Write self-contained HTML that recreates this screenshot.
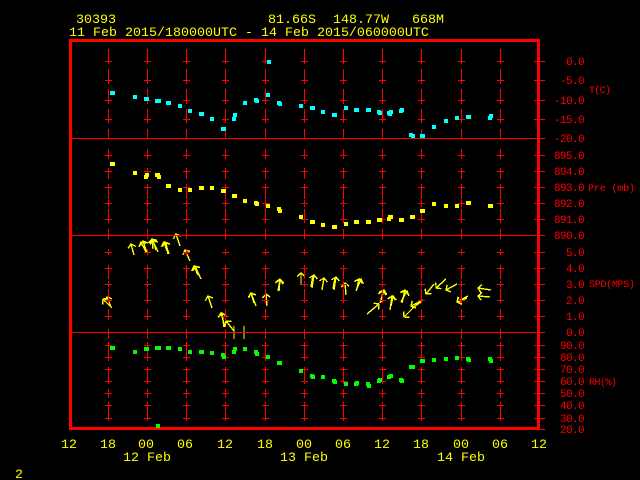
<!DOCTYPE html>
<html><head><meta charset="utf-8"><title>30393</title>
<style>
html,body{margin:0;padding:0;background:#000;width:640px;height:480px;overflow:hidden}
svg{display:block}
text{font-family:"Liberation Mono",monospace;white-space:pre}
.y{fill:#ff0;font-size:13.33px}
.r{fill:#f00;font-size:10px}
.e{text-anchor:end;font-size:11px;letter-spacing:-.6px}
</style></head><body>
<svg width="640" height="480" viewBox="0 0 640 480" xmlns="http://www.w3.org/2000/svg">
<defs>
<marker id="h" markerUnits="userSpaceOnUse" markerWidth="10" markerHeight="10" refX="0" refY="0" orient="auto" overflow="visible" viewBox="-5 -5 10 10">
<path d="M-3.5,-4 L0,0 L-3.5,4" fill="none" stroke="#ff0" stroke-width="1.4" shape-rendering="crispEdges"/>
</marker>
<g id="c" fill="#f00" shape-rendering="crispEdges">
<rect x="0" y="49" width="1" height="15"/><rect x="0" y="69" width="1" height="15"/><rect x="0" y="89" width="1" height="15"/><rect x="0" y="109" width="1" height="14"/><rect x="0" y="129" width="1" height="9"/>
<rect x="0" y="149" width="1" height="10"/><rect x="0" y="168" width="1" height="11"/><rect x="0" y="184" width="1" height="15"/><rect x="0" y="200" width="1" height="7"/><rect x="0" y="209" width="1" height="14"/><rect x="0" y="229" width="1" height="10"/>
<rect x="0" y="249" width="1" height="6"/><rect x="0" y="265" width="1" height="14"/><rect x="0" y="281" width="1" height="6"/><rect x="0" y="289" width="1" height="14"/><rect x="0" y="309" width="1" height="11"/><rect x="0" y="329" width="1" height="10"/>
<rect x="0" y="342" width="1" height="19"/><rect x="0" y="367" width="1" height="17"/><rect x="0" y="389" width="1" height="9"/><rect x="0" y="402" width="1" height="19"/>
<rect x="-3" y="61" width="7" height="1"/><rect x="-3" y="80" width="7" height="1"/><rect x="-3" y="100" width="7" height="1"/><rect x="-3" y="119" width="7" height="1"/>
<rect x="-3" y="155" width="7" height="1"/><rect x="-3" y="171" width="7" height="1"/><rect x="-3" y="187" width="7" height="1"/><rect x="-3" y="203" width="7" height="1"/><rect x="-3" y="219" width="7" height="1"/>
<rect x="-3" y="252" width="7" height="1"/><rect x="-3" y="268" width="7" height="1"/><rect x="-3" y="284" width="7" height="1"/><rect x="-3" y="300" width="7" height="1"/><rect x="-3" y="316" width="7" height="1"/>
<rect x="-3" y="345" width="7" height="1"/><rect x="-3" y="357" width="7" height="1"/><rect x="-3" y="369" width="7" height="1"/><rect x="-3" y="381" width="7" height="1"/><rect x="-3" y="393" width="7" height="1"/><rect x="-3" y="405" width="7" height="1"/><rect x="-3" y="418" width="7" height="1"/>
</g>
</defs>

<!-- wind arrows -->
<g stroke="#ff0" stroke-width="1.4" fill="none" shape-rendering="crispEdges">
<line x1="112" y1="308" x2="103" y2="299" marker-end="url(#h)"/><line x1="111" y1="307" x2="107" y2="297" marker-end="url(#h)"/>
<line x1="134" y1="255" x2="131" y2="244" marker-end="url(#h)"/>
<line x1="147" y1="253" x2="143" y2="241" marker-end="url(#h)"/><line x1="146" y1="252" x2="141" y2="242" marker-end="url(#h)"/>
<line x1="158" y1="252" x2="152" y2="239" marker-end="url(#h)"/><line x1="153" y1="249" x2="152" y2="239" marker-end="url(#h)"/><line x1="156" y1="250" x2="153" y2="240" marker-end="url(#h)"/>
<line x1="169" y1="254" x2="165" y2="242" marker-end="url(#h)"/><line x1="167" y1="251" x2="164" y2="242" marker-end="url(#h)"/><line x1="168" y1="254" x2="166" y2="243"/>
<line x1="180" y1="246" x2="176" y2="234" marker-end="url(#h)"/>
<line x1="190" y1="261" x2="185" y2="250" marker-end="url(#h)"/>
<line x1="201" y1="279" x2="195" y2="266" marker-end="url(#h)"/><line x1="198" y1="275" x2="194" y2="266" marker-end="url(#h)"/>
<line x1="212" y1="308" x2="208" y2="296" marker-end="url(#h)"/>
<line x1="225" y1="327" x2="221" y2="313" marker-end="url(#h)"/><line x1="224" y1="327" x2="222" y2="313" marker-end="url(#h)"/>
<line x1="234" y1="331" x2="226" y2="321" marker-end="url(#h)"/>
<line x1="256" y1="306" x2="251" y2="293" marker-end="url(#h)"/><line x1="254" y1="303" x2="251" y2="293" marker-end="url(#h)"/>
<line x1="267" y1="306" x2="266" y2="294" marker-end="url(#h)"/>
<line x1="279" y1="291" x2="280" y2="279" marker-end="url(#h)"/><line x1="278" y1="291" x2="280" y2="280" marker-end="url(#h)"/>
<line x1="301" y1="285" x2="301" y2="273" marker-end="url(#h)"/>
<line x1="312" y1="288" x2="314" y2="275" marker-end="url(#h)"/><line x1="311" y1="287" x2="313" y2="275"/>
<line x1="322" y1="290" x2="324" y2="278" marker-end="url(#h)"/>
<line x1="334" y1="290" x2="336" y2="277" marker-end="url(#h)"/><line x1="333" y1="289" x2="335" y2="278"/>
<line x1="346" y1="295" x2="345" y2="283" marker-end="url(#h)"/>
<line x1="356" y1="291" x2="361" y2="279" marker-end="url(#h)"/><line x1="357" y1="288" x2="359" y2="279" marker-end="url(#h)"/>
<line x1="367" y1="314" x2="379" y2="304" marker-end="url(#h)"/>
<line x1="380" y1="303" x2="384" y2="290" marker-end="url(#h)"/><line x1="381" y1="302" x2="383" y2="291" marker-end="url(#h)"/>
<line x1="390" y1="310" x2="392" y2="296" marker-end="url(#h)"/><line x1="391" y1="306" x2="393" y2="296" marker-end="url(#h)"/>
<line x1="402" y1="303" x2="405" y2="290" marker-end="url(#h)"/><line x1="401" y1="302" x2="407" y2="291" marker-end="url(#h)"/>
<line x1="418" y1="303" x2="404" y2="317" marker-end="url(#h)"/>
<line x1="423" y1="300" x2="411" y2="306" marker-end="url(#h)"/><line x1="421" y1="302" x2="412" y2="308"/>
<line x1="434" y1="284" x2="426" y2="294" marker-end="url(#h)"/>
<line x1="446" y1="279" x2="436" y2="288" marker-end="url(#h)"/>
<line x1="457" y1="284" x2="446" y2="290" marker-end="url(#h)"/>
<line x1="468" y1="296" x2="457" y2="302" marker-end="url(#h)"/><line x1="467" y1="298" x2="457" y2="302" marker-end="url(#h)"/>
<line x1="491" y1="290" x2="478" y2="288" marker-end="url(#h)"/>
<line x1="490" y1="297" x2="478" y2="296" marker-end="url(#h)"/>
<line x1="234" y1="326" x2="234" y2="339"/><line x1="244" y1="326" x2="244" y2="339"/>
</g>

<!-- frame & horizontal rules -->
<g fill="#f00" shape-rendering="crispEdges">
<rect x="69" y="39" width="471" height="3"/>
<rect x="69" y="427" width="471" height="3"/>
<rect x="69" y="39" width="3" height="391"/>
<rect x="537" y="39" width="3" height="391"/>
<rect x="72" y="138" width="473" height="1"/>
<rect x="72" y="235" width="473" height="1"/>
<rect x="72" y="332" width="473" height="1"/>
<rect x="534" y="61" width="11" height="1"/><rect x="534" y="80" width="11" height="1"/><rect x="534" y="100" width="11" height="1"/><rect x="534" y="119" width="11" height="1"/>
<rect x="534" y="155" width="11" height="1"/><rect x="534" y="171" width="11" height="1"/><rect x="534" y="187" width="11" height="1"/><rect x="534" y="203" width="11" height="1"/><rect x="534" y="219" width="11" height="1"/>
<rect x="534" y="252" width="11" height="1"/><rect x="534" y="268" width="11" height="1"/><rect x="534" y="284" width="11" height="1"/><rect x="534" y="300" width="11" height="1"/><rect x="534" y="316" width="11" height="1"/>
<rect x="534" y="345" width="11" height="1"/><rect x="534" y="357" width="11" height="1"/><rect x="534" y="369" width="11" height="1"/><rect x="534" y="381" width="11" height="1"/><rect x="534" y="393" width="11" height="1"/><rect x="534" y="405" width="11" height="1"/><rect x="534" y="418" width="11" height="1"/><rect x="534" y="429" width="11" height="1"/>
</g>
<use href="#c" x="108"/><use href="#c" x="147"/><use href="#c" x="186"/><use href="#c" x="225"/><use href="#c" x="265"/><use href="#c" x="304"/><use href="#c" x="343"/><use href="#c" x="382"/><use href="#c" x="421"/><use href="#c" x="461"/><use href="#c" x="500"/>

<!-- temperature -->
<g fill="#0ff" shape-rendering="crispEdges">
<rect x="110" y="91" width="5" height="4"/><rect x="133" y="95" width="4" height="4"/><rect x="144" y="97" width="5" height="4"/><rect x="155" y="99" width="6" height="4"/><rect x="166" y="101" width="5" height="4"/><rect x="178" y="104" width="4" height="4"/><rect x="188" y="109" width="4" height="4"/><rect x="199" y="112" width="5" height="4"/><rect x="210" y="117" width="4" height="4"/><rect x="221" y="127" width="5" height="4"/><rect x="232" y="117" width="4" height="4"/><rect x="233" y="113" width="4" height="4"/><rect x="243" y="101" width="4" height="4"/><rect x="254" y="98" width="4" height="4"/><rect x="255" y="99" width="4" height="4"/><rect x="266" y="93" width="4" height="4"/><rect x="267" y="60" width="4" height="4"/><rect x="277" y="101" width="4" height="4"/><rect x="278" y="102" width="4" height="4"/><rect x="299" y="104" width="4" height="4"/><rect x="310" y="106" width="5" height="4"/>
<rect x="321" y="110" width="4" height="4"/><rect x="332" y="113" width="5" height="4"/><rect x="344" y="106" width="4" height="4"/><rect x="354" y="108" width="5" height="4"/><rect x="366" y="108" width="5" height="4"/><rect x="377" y="110" width="4" height="4"/><rect x="378" y="111" width="4" height="4"/><rect x="387" y="111" width="4" height="4"/><rect x="388" y="112" width="4" height="4"/><rect x="389" y="110" width="4" height="4"/><rect x="399" y="109" width="4" height="4"/><rect x="400" y="108" width="4" height="4"/><rect x="409" y="133" width="4" height="4"/><rect x="411" y="134" width="4" height="4"/><rect x="420" y="134" width="5" height="4"/><rect x="432" y="125" width="4" height="4"/><rect x="444" y="119" width="4" height="4"/><rect x="455" y="116" width="4" height="4"/><rect x="466" y="115" width="5" height="4"/><rect x="488" y="116" width="4" height="4"/><rect x="489" y="114" width="4" height="4"/>
</g>
<!-- pressure -->
<g fill="#ff0" shape-rendering="crispEdges">
<rect x="110" y="162" width="5" height="4"/><rect x="133" y="171" width="4" height="4"/><rect x="144" y="175" width="4" height="4"/><rect x="145" y="173" width="4" height="4"/><rect x="155" y="173" width="5" height="4"/><rect x="157" y="175" width="4" height="4"/><rect x="166" y="184" width="5" height="4"/><rect x="178" y="188" width="4" height="4"/><rect x="188" y="188" width="4" height="4"/><rect x="199" y="186" width="5" height="4"/><rect x="210" y="186" width="4" height="4"/><rect x="221" y="189" width="5" height="4"/><rect x="232" y="194" width="5" height="4"/><rect x="243" y="199" width="4" height="4"/><rect x="254" y="201" width="4" height="4"/><rect x="255" y="202" width="4" height="4"/><rect x="266" y="204" width="4" height="4"/><rect x="277" y="207" width="4" height="4"/><rect x="278" y="209" width="4" height="4"/><rect x="299" y="215" width="4" height="4"/><rect x="310" y="220" width="5" height="4"/><rect x="321" y="223" width="4" height="4"/><rect x="332" y="225" width="5" height="4"/><rect x="344" y="222" width="4" height="4"/><rect x="354" y="220" width="5" height="4"/><rect x="366" y="220" width="5" height="4"/><rect x="377" y="218" width="5" height="4"/><rect x="387" y="217" width="4" height="4"/><rect x="388" y="215" width="5" height="4"/><rect x="399" y="218" width="5" height="4"/><rect x="410" y="215" width="5" height="4"/><rect x="420" y="209" width="5" height="4"/><rect x="432" y="202" width="4" height="4"/><rect x="444" y="204" width="4" height="4"/><rect x="455" y="204" width="4" height="4"/><rect x="466" y="201" width="5" height="4"/><rect x="488" y="204" width="5" height="4"/>
</g>
<!-- humidity -->
<g fill="#0f0" shape-rendering="crispEdges">
<rect x="110" y="346" width="5" height="4"/><rect x="133" y="350" width="4" height="4"/><rect x="144" y="347" width="5" height="4"/><rect x="155" y="346" width="6" height="4"/><rect x="166" y="346" width="5" height="4"/><rect x="178" y="347" width="4" height="4"/><rect x="188" y="350" width="4" height="4"/><rect x="199" y="350" width="5" height="4"/><rect x="210" y="351" width="4" height="4"/><rect x="221" y="353" width="4" height="4"/><rect x="222" y="355" width="4" height="4"/><rect x="232" y="350" width="4" height="4"/><rect x="233" y="347" width="4" height="4"/><rect x="243" y="347" width="4" height="4"/><rect x="254" y="350" width="4" height="4"/><rect x="255" y="352" width="4" height="4"/><rect x="266" y="355" width="4" height="4"/><rect x="277" y="361" width="5" height="4"/><rect x="299" y="369" width="4" height="4"/><rect x="310" y="374" width="4" height="4"/><rect x="311" y="375" width="4" height="4"/><rect x="156" y="424" width="4" height="4"/>
<rect x="321" y="375" width="4" height="4"/><rect x="332" y="379" width="4" height="4"/><rect x="333" y="380" width="4" height="4"/><rect x="344" y="382" width="4" height="4"/><rect x="354" y="382" width="4" height="4"/><rect x="355" y="381" width="4" height="4"/><rect x="366" y="382" width="4" height="4"/><rect x="367" y="384" width="4" height="4"/><rect x="377" y="379" width="4" height="4"/><rect x="378" y="378" width="4" height="4"/><rect x="387" y="375" width="4" height="4"/><rect x="389" y="374" width="4" height="4"/><rect x="399" y="378" width="4" height="4"/><rect x="400" y="379" width="4" height="4"/><rect x="409" y="365" width="6" height="4"/><rect x="420" y="359" width="5" height="4"/><rect x="432" y="358" width="4" height="4"/><rect x="444" y="357" width="4" height="4"/><rect x="455" y="356" width="4" height="4"/><rect x="466" y="357" width="4" height="4"/><rect x="467" y="358" width="4" height="4"/><rect x="488" y="357" width="4" height="4"/><rect x="489" y="359" width="4" height="4"/>
</g>

<!-- header -->
<text class="y" x="76" y="23">30393</text>
<text class="y" x="268" y="23">81.66S</text>
<text class="y" x="333" y="23">148.77W</text>
<text class="y" x="412" y="23">668M</text>
<text class="y" x="69" y="36">11 Feb 2015/180000UTC - 14 Feb 2015/060000UTC</text>

<!-- y labels -->
<text class="r e" x="584" y="65">0.0</text>
<text class="r e" x="584" y="84">-5.0</text>
<text class="r e" x="584" y="104">-10.0</text>
<text class="r e" x="584" y="123">-15.0</text>
<text class="r e" x="584" y="142">-20.0</text>
<text class="r e" x="584" y="159">895.0</text>
<text class="r e" x="584" y="175">894.0</text>
<text class="r e" x="584" y="191">893.0</text>
<text class="r e" x="584" y="207">892.0</text>
<text class="r e" x="584" y="223">891.0</text>
<text class="r e" x="584" y="239">890.0</text>
<text class="r e" x="584" y="256">5.0</text>
<text class="r e" x="584" y="272">4.0</text>
<text class="r e" x="584" y="288">3.0</text>
<text class="r e" x="584" y="304">2.0</text>
<text class="r e" x="584" y="320">1.0</text>
<text class="r e" x="584" y="336">0.0</text>
<text class="r e" x="584" y="349">90.0</text>
<text class="r e" x="584" y="361">80.0</text>
<text class="r e" x="584" y="373">70.0</text>
<text class="r e" x="584" y="385">60.0</text>
<text class="r e" x="584" y="397">50.0</text>
<text class="r e" x="584" y="409">40.0</text>
<text class="r e" x="584" y="422">30.0</text>
<text class="r e" x="584" y="433">20.0</text>
<text class="r" x="589" y="93" textLength="22">T(C)</text>
<text class="r" x="588" y="191" textLength="47">Pre (mb)</text>
<text class="r" x="589" y="287" textLength="46">SPD(MPS)</text>
<text class="r" x="589" y="385" textLength="28">RH(%)</text>

<!-- x labels -->
<text class="y" x="61" y="448">12</text>
<text class="y" x="100" y="448">18</text>
<text class="y" x="138" y="448">00</text>
<text class="y" x="177" y="448">06</text>
<text class="y" x="217" y="448">12</text>
<text class="y" x="257" y="448">18</text>
<text class="y" x="296" y="448">00</text>
<text class="y" x="335" y="448">06</text>
<text class="y" x="374" y="448">12</text>
<text class="y" x="413" y="448">18</text>
<text class="y" x="453" y="448">00</text>
<text class="y" x="492" y="448">06</text>
<text class="y" x="531" y="448">12</text>
<text class="y" x="123" y="461">12 Feb</text>
<text class="y" x="280" y="461">13 Feb</text>
<text class="y" x="437" y="461">14 Feb</text>
<text class="y" x="15" y="478">2</text>
</svg>
</body></html>
